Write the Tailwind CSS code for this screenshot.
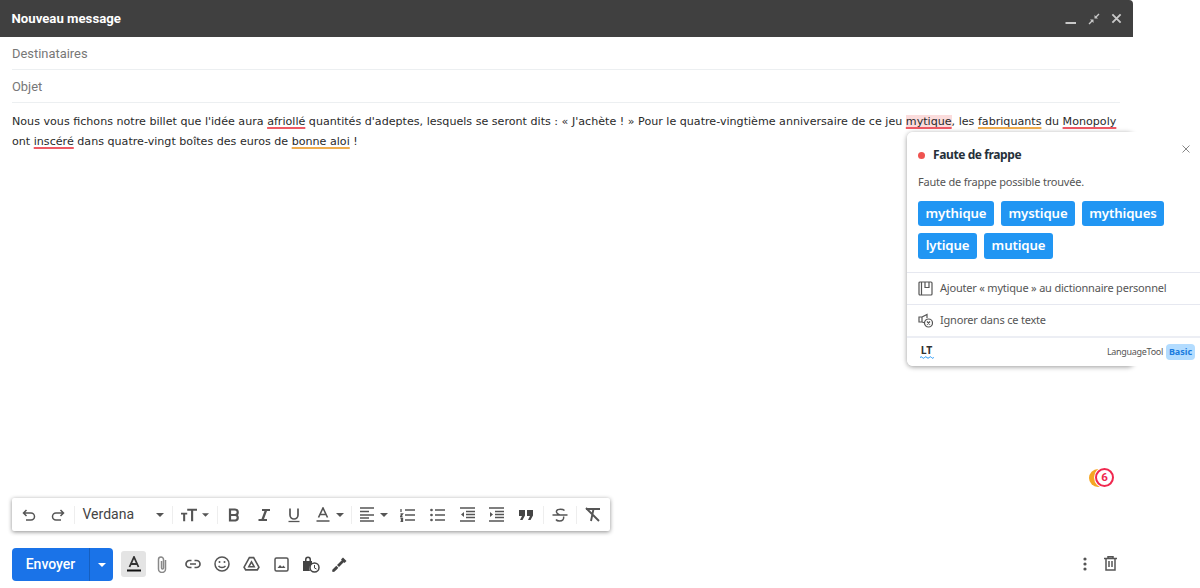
<!DOCTYPE html>
<html lang="fr"><head><meta charset="utf-8"><script src="https://cdn.jsdelivr.net/npm/@tailwindcss/browser@4"></script><title>Nouveau message</title></head>
<body class="bg-white overflow-hidden">
<div class="relative w-[1200px] h-[588px] overflow-hidden font-['Roboto',sans-serif]">
  <div class="w-[1133px] h-[588px] flex flex-col">
    <header class="h-[37px] shrink-0 bg-[#404040] rounded-tr-[4px] flex items-center justify-between pl-[11.500px] pr-[11px]">
      <span class="text-white text-[13.200px] font-bold">Nouveau message</span>
      <div class="flex items-center gap-[11px] text-[#c8c8c8]">
        <svg class="w-[12px] h-[12px] ml-[1px]" viewBox="0 0 12 12"><path d="M.5 10h10.500" stroke="currentColor" stroke-width="2"/></svg>
        <svg class="w-[12px] h-[12px]" viewBox="0 0 12 12"><path d="M1 11l3.500-3.500M7.500 4.500L11 1" stroke="currentColor" stroke-width="1.400"/><path d="M2 6.500h3.500V10zM10 5.500H6.500V2z" fill="currentColor"/></svg>
        <svg class="w-[11px] h-[11px]" viewBox="0 0 12 12"><path d="M1.500 1.500l9 9M10.500 1.500l-9 9" stroke="currentColor" stroke-width="2"/></svg>
      </div>
    </header>
    <div class="mx-[12px] w-[1108px] h-[33px] shrink-0 border-b border-[#eceff1] flex items-center pt-[1px] text-[12.900px] text-[#777]">Destinataires</div>
    <div class="mx-[12px] w-[1108px] h-[33px] shrink-0 border-b border-[#eceff1] flex items-center pt-[1px] text-[12.900px] text-[#777]">Objet</div>
    <div class="flex-1 mx-[12px] w-[1108px] pt-[8.500px] font-['DejaVu_Sans',sans-serif] text-[11.120px] leading-[20px] text-[#2a2a2a] whitespace-nowrap">
      <div>Nous vous fichons notre billet que l'idée aura <span class="underline decoration-2 underline-offset-[2px] decoration-[#ef5a64] [text-decoration-skip-ink:none]">afriollé</span> quantités d'adeptes, lesquels se seront dits : « J'achète ! » Pour le quatre-vingtième anniversaire de ce jeu <span class="underline decoration-2 underline-offset-[2px] decoration-[#ef5a64] [text-decoration-skip-ink:none] bg-[#fbdcdc]">mytique</span>, les <span class="underline decoration-2 underline-offset-[2px] decoration-[#f0ad4e] [text-decoration-skip-ink:none]">fabriquants</span> du <span class="underline decoration-2 underline-offset-[2px] decoration-[#ef5a64] [text-decoration-skip-ink:none]">Monopoly</span></div>
      <div>ont <span class="underline decoration-2 underline-offset-[2px] decoration-[#ef5a64] [text-decoration-skip-ink:none]">inscéré</span> dans quatre-vingt boîtes des euros de <span class="underline decoration-2 underline-offset-[2px] decoration-[#f0ad4e] [text-decoration-skip-ink:none]">bonne aloi</span> !</div>
    </div>
    <div class="ml-[12px] w-[598px] h-[33px] shrink-0 bg-white rounded-[2px] shadow-[0_1px_4px_rgba(0,0,0,0.45)] flex items-center text-[#555]">
      <svg class="shrink-0 w-[16px] h-[16px] ml-[9px]" viewBox="0 0 16 16" fill="none" stroke="currentColor" stroke-width="1.500"><path d="M5.500 3 2.500 6l3 3M3 6h7a3.500 3.500 0 0 1 0 7H5"/></svg>
      <svg class="shrink-0 w-[16px] h-[16px] ml-[13px]" viewBox="0 0 16 16" fill="none" stroke="currentColor" stroke-width="1.500"><path d="M10.500 3l3 3-3 3M13 6H6a3.500 3.500 0 0 0 0 7h5"/></svg>
      <div class="shrink-0 w-px h-[18px] bg-[#eee] ml-[8px]"></div>
      <span class="shrink-0 ml-[7.500px] text-[14px] w-[73.500px] text-[#444]">Verdana</span>
      <svg class="shrink-0 w-[8px] h-[4px]" viewBox="0 0 8 4"><path d="M0 0h8L4 4z" fill="currentColor"/></svg>
      <div class="shrink-0 w-px h-[18px] bg-[#eee] ml-[8px]"></div>
      <svg class="shrink-0 w-[16px] h-[14px] ml-[8px]" viewBox="0 0 18 14" fill="currentColor"><path d="M7 0h11v2.300h-4.300V14h-2.400V2.300H7zM0 4.500h7v2H4.700V14H2.400V6.500H0z"/></svg>
      <svg class="shrink-0 w-[7px] h-[4px] ml-[5px]" viewBox="0 0 8 4"><path d="M0 0h8L4 4z" fill="currentColor"/></svg>
      <div class="shrink-0 w-px h-[18px] bg-[#eee] ml-[8px]"></div>
      <svg class="shrink-0 w-[16px] h-[16px] ml-[8px]" viewBox="0 0 16 16" fill="none" stroke="currentColor" stroke-width="2.200"><path d="M4 2.500h5a2.700 2.700 0 0 1 0 5.500H4zM4 8h5.500a2.800 2.800 0 0 1 0 5.500H4z"/></svg>
      <svg class="shrink-0 w-[16px] h-[16px] ml-[14px]" viewBox="0 0 16 16" fill="currentColor"><path d="M6 2h8v2h-3L8 12h3v2H2.500v-2h3L8.500 4H6z"/></svg>
      <svg class="shrink-0 w-[16px] h-[16px] ml-[13.500px]" viewBox="0 0 16 16" fill="none" stroke="currentColor" stroke-width="1.700"><path d="M4 1.500V8a4 4 0 0 0 8 0V1.500"/><path d="M2.500 14.500h11" stroke-width="1.300"/></svg>
      <svg class="shrink-0 w-[14px] h-[15px] ml-[14px]" viewBox="0 0 14 15" fill="none" stroke="currentColor" stroke-width="1.600"><path d="M2.500 10.500 7 1l4.500 9.500M4 7.500h6"/><path d="M0.500 14h13" stroke-width="1.500"/></svg>
      <svg class="shrink-0 w-[8px] h-[4px] ml-[6.500px]" viewBox="0 0 8 4"><path d="M0 0h8L4 4z" fill="currentColor"/></svg>
      <div class="shrink-0 w-px h-[18px] bg-[#eee] ml-[7px]"></div>
      <svg class="shrink-0 w-[14px] h-[15px] ml-[8px]" viewBox="0 0 14 15" stroke="currentColor" stroke-width="1.500"><path d="M0 1h14M0 4.500h9M0 8h14M0 11h9M0 14h14"/></svg>
      <svg class="shrink-0 w-[8px] h-[4px] ml-[6px]" viewBox="0 0 8 4"><path d="M0 0h8L4 4z" fill="currentColor"/></svg>
      <svg class="shrink-0 w-[15px] h-[14px] ml-[12px]" viewBox="0 0 15 14" stroke="currentColor" stroke-width="1.300" fill="none"><path d="M5 2h10M5 7h10M5 12h10M1 1v3M0.500 6h2l-2 2.500h2M0.500 10.500h2v3h-2M1 12h1.500"/></svg>
      <svg class="shrink-0 w-[15px] h-[14px] ml-[15px]" viewBox="0 0 15 14" stroke="currentColor" stroke-width="1.500" fill="currentColor"><path d="M5 2h10M5 7h10M5 12h10"/><circle cx="1.500" cy="2" r=".6"/><circle cx="1.500" cy="7" r=".6"/><circle cx="1.500" cy="12" r=".6"/></svg>
      <svg class="shrink-0 w-[15px] h-[15px] ml-[15px]" viewBox="0 0 15 15" stroke="currentColor" stroke-width="1.400"><path d="M0 1h15M6 4.500h9M6 7.500h9M6 10.500h9M0 14h15"/><path d="M4 5v5L1 7.500z" fill="currentColor" stroke="none"/></svg>
      <svg class="shrink-0 w-[15px] h-[15px] ml-[14px]" viewBox="0 0 15 15" stroke="currentColor" stroke-width="1.400"><path d="M0 1h15M6 4.500h9M6 7.500h9M6 10.500h9M0 14h15"/><path d="M1 5v5l3-2.500z" fill="currentColor" stroke="none"/></svg>
      <svg class="shrink-0 w-[14px] h-[10px] ml-[15px]" viewBox="0 0 14 10" fill="#444"><path d="M0 0h6v5.500L3.500 10H1l2-4H0zM8 0h6v5.500L11.500 10H9l2-4H8z"/></svg>
      <div class="shrink-0 w-px h-[18px] bg-[#eee] ml-[10px]"></div>
      <svg class="shrink-0 w-[16px] h-[14px] ml-[8px]" viewBox="0 0 15 14" fill="none" stroke="currentColor" stroke-width="1.500"><path d="M12 2.500C10.500 1 5 .5 4 3c-.7 2 1.500 3 3.500 4M0 7h15M11 8.500c1 2.500-1 4.500-4 4.500-2 0-3-.7-3.500-1.500"/></svg>
      <div class="shrink-0 w-px h-[18px] bg-[#eee] ml-[8px]"></div>
      <svg class="shrink-0 w-[16px] h-[15px] ml-[8px]" viewBox="0 0 16 15" fill="none" stroke="currentColor" stroke-width="1.900"><path d="M1 2h14M8.500 2L6 14M1 1l13 13"/></svg>
    </div>
    <footer class="h-[57px] shrink-0 flex items-start pt-[17px] pl-[12px] text-[#555]">
      <div class="shrink-0 w-[101px] h-[33px] bg-[#1a73e8] rounded-[4px] flex text-white overflow-hidden">
        <span class="w-[78px] flex items-center justify-center text-[14px] font-medium border-r border-[#155fc0]">Envoyer</span>
        <span class="flex-1 flex items-center justify-center"><svg class="w-[8px] h-[4px]" viewBox="0 0 8 4"><path d="M0 0h8L4 4z" fill="#fff"/></svg></span>
      </div>
      <div class="shrink-0 ml-[8px] w-[25px] h-[26px] mt-[3px] rounded-[3px] bg-[#e4e4e4] flex items-center justify-center">
        <svg class="w-[14px] h-[16px]" viewBox="0 0 14 16" fill="none" stroke="#333" stroke-width="1.800"><path d="M2.500 11 7 1l4.500 10M4 8h6"/><path d="M0 14.500h14" stroke="#111" stroke-width="2"/></svg>
      </div>
      <svg class="shrink-0 w-[10px] h-[17px] ml-[11px] mt-[8px]" viewBox="0 0 10 17" fill="none" stroke="#888" stroke-width="1.500"><path d="M8.500 4v9a3.500 3.500 0 0 1-7 0V3.500a2.500 2.500 0 0 1 5 0V12a1 1 0 0 1-2 0V5"/></svg>
      <svg class="shrink-0 w-[16px] h-[10px] ml-[18px] mt-[11px]" viewBox="0 0 16 10" fill="none" stroke="#555" stroke-width="1.700"><path d="M6.500 1.500H4.500a3.500 3.500 0 0 0 0 7h2M9.500 1.500h2a3.500 3.500 0 0 1 0 7h-2M5 5h6"/></svg>
      <svg class="shrink-0 w-[16px] h-[16px] ml-[13px] mt-[8px]" viewBox="0 0 16 16" fill="none" stroke="#555" stroke-width="1.500"><circle cx="8" cy="8" r="7"/><path d="M4.500 9.800c1.500 2.200 5.500 2.200 7 0"/><circle cx="5.500" cy="6" r="1" fill="#555" stroke="none"/><circle cx="10.500" cy="6" r="1" fill="#555" stroke="none"/></svg>
      <svg class="shrink-0 w-[17px] h-[15px] ml-[13px] mt-[8px]" viewBox="0 0 16 14" fill="none" stroke="#555" stroke-width="1.500"><path d="M6 1.500h4l5 9-1.500 2.500h-11L1 10.500zM5.500 10h5L8 5.500z"/></svg>
      <svg class="shrink-0 w-[15px] h-[15px] ml-[14px] mt-[9px]" viewBox="0 0 15 15" fill="none" stroke="#555" stroke-width="1.500"><rect x="1" y="1" width="13" height="13" rx="1.500"/><path d="M3.500 11l2.500-3 2 2 1.500-1.500 2 2.500z" fill="#555" stroke="none"/></svg>
      <svg class="shrink-0 w-[18px] h-[17px] ml-[13px] mt-[8px]" viewBox="0 0 18 17" fill="#444"><path d="M3 5V3.500a3 3 0 0 1 6 0V5h1v3a5 5 0 0 0-2 7H1V5zM4.500 5h3V3.500a1.500 1.500 0 0 0-3 0z"/><circle cx="12.500" cy="11.500" r="4.500" fill="none" stroke="#444" stroke-width="1.500"/><path d="M12.500 9v3l2 1" fill="none" stroke="#444"/></svg>
      <svg class="shrink-0 w-[15px] h-[15px] ml-[12px] mt-[9px]" viewBox="0 0 15 15" fill="#444"><path d="M11 .5l3.500 3.500-2 2-.8-.8L7 10 5 8l4.800-4.700-.8-.8zM4.300 8.700l2 2-1.500 1.800L2 15l-2-.5.500-2 2.300-2.300z"/></svg>
      <div class="flex-1"></div>
      <svg class="shrink-0 w-[4px] h-[14px] mr-[17px] mt-[9px]" viewBox="0 0 4 14" fill="#555"><circle cx="2" cy="2" r="1.600"/><circle cx="2" cy="7" r="1.600"/><circle cx="2" cy="12" r="1.600"/></svg>
      <svg class="shrink-0 w-[13px] h-[15px] mr-[16px] mt-[8px]" viewBox="0 0 13 15" fill="none" stroke="#555" stroke-width="1.500"><path d="M0 2.500h13M4 2.500V.8h5v1.700M2 2.500V14h9V2.500M5 5v6M8 5v6"/></svg>
    </footer>
  </div>

  <div class="absolute left-[1089px] top-[468px] w-[26px] h-[20px]">
    <div class="absolute left-0 top-[1px] w-[18px] h-[18px] rounded-full bg-[#f5a623]"></div>
    <div class="absolute left-[5px] top-[-1px] w-[21px] h-[21px] rounded-full bg-white"></div>
    <div class="absolute left-[6px] top-0 w-[19px] h-[19px] rounded-full border-2 border-[#f0284f] text-[#f0284f] flex items-center justify-center text-[11.500px] font-bold">6</div>
  </div>

  <aside class="absolute left-[907px] top-[132px] w-[293px] h-[234px] font-['Noto_Sans',sans-serif] text-[#444]">
    <div class="absolute inset-0 right-[66px] rounded-[6px] shadow-[0_1px_5px_rgba(0,0,0,0.4)]"></div>
    <div class="absolute inset-0 bg-white rounded-l-[6px] flex flex-col">
      <div class="h-[43px] flex items-center pl-[11px] pt-[3px]">
        <span class="w-[7px] h-[7px] rounded-full bg-[#ef5350]"></span>
        <span class="ml-[8px] text-[12px] font-bold text-[#26303a] tracking-[-0.4px]">Faute de frappe</span>
        <svg class="absolute left-[275px] top-[13px] w-[8px] h-[8px]" viewBox="0 0 8 8" stroke="#888"><path d="M.5.500l7 7M7.500.500l-7 7"/></svg>
      </div>
      <p class="pl-[11px] text-[11px] leading-[14px] tracking-[-0.2px] text-[#555]">Faute de frappe possible trouvée.</p>
      <div class="pl-[11px] mt-[12px] flex flex-wrap gap-x-[7px] gap-y-[7px] w-[270px] text-white text-[13.200px] font-semibold tracking-[-0.1px]">
        <span class="h-[25px] w-[76px] justify-center bg-[#2196f3] rounded-[3px] flex items-center">mythique</span>
        <span class="h-[25px] w-[74px] justify-center bg-[#2196f3] rounded-[3px] flex items-center">mystique</span>
        <span class="h-[25px] w-[82px] justify-center bg-[#2196f3] rounded-[3px] flex items-center">mythiques</span>
        <span class="h-[26px] w-[59px] justify-center bg-[#2196f3] rounded-[3px] flex items-center">lytique</span>
        <span class="h-[26px] w-[69px] justify-center bg-[#2196f3] rounded-[3px] flex items-center">mutique</span>
      </div>
      <div class="mt-[13px] h-[32px] border-t border-[#e6e8f0] flex items-center pl-[11px] text-[11px] tracking-[-0.2px] text-[#555]">
        <svg class="w-[15px] h-[15px] mr-[7px]" viewBox="0 0 15 15" fill="none" stroke="#555" stroke-width="1.200"><rect x="1" y="1" width="13" height="13" rx="1"/><path d="M3.500 1v13M7 1v5.500h4V1"/></svg>Ajouter « mytique » au dictionnaire personnel
      </div>
      <div class="h-[32px] border-t border-[#e6e8f0] flex items-center pl-[11px] text-[11px] tracking-[-0.2px] text-[#555]">
        <svg class="w-[15px] h-[15px] mr-[7px]" viewBox="0 0 15 15" fill="none" stroke="#555" stroke-width="1.200"><path d="M1 4h3v5H1zM4 4l5-2.500V5M4 9l3 1"/><circle cx="10.500" cy="10" r="4" fill="#fff"/><path d="M9 8.500l3 3M12 8.500l-3 3"/></svg>Ignorer dans ce texte
      </div>
      <div class="h-[30px] border-t-2 border-[#eceef4] flex items-center pl-[12px] pr-[5px]">
        <span class="flex flex-col items-center w-[15px]">
          <span class="text-[10.500px] font-bold text-[#333] leading-[11px]">LT</span>
          <svg class="w-[14px] h-[3px]" viewBox="0 0 14 3" fill="none" stroke="#2196f3" stroke-width="1"><path d="M0 1.500q1.200-1.500 2.300 0t2.300 0 2.300 0 2.300 0 2.300 0 2.300 0"/></svg>
        </span>
        <span class="flex-1"></span>
        <span class="text-[9px] text-[#555] tracking-[-0.3px] mr-[3px]">LanguageTool</span>
        <span class="h-[16px] w-[29px] rounded-[4px] bg-[#b3dcff] text-[#1a7be0] text-[9px] font-bold flex items-center justify-center">Basic</span>
      </div>
    </div>
  </aside>
</div>
</body></html>
